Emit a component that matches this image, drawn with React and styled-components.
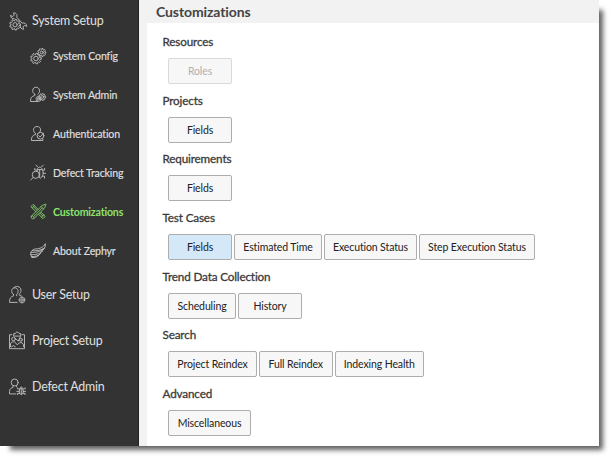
import React from 'react';
import styled, { createGlobalStyle } from 'styled-components';

const GlobalStyle = createGlobalStyle`
  * { box-sizing: border-box; }
  body { margin: 0; height: 461px; background: #fff; font-family: Lato, "Open Sans", sans-serif; }
`;

const Page = styled.div`
  width: 614px;
  height: 461px;
  overflow: hidden;
  background: #fff;
`;

const Window = styled.div`
  width: 599px;
  height: 446px;
  display: flex;
  background: #fff;
  box-shadow: 7px 7px 5px -3px rgba(0, 0, 0, 0.62);
`;

const Sidebar = styled.nav`
  width: 139px;
  flex: none;
  background: #333;
  border-right: 1px solid #222;
  display: flex;
  flex-direction: column;
`;

const MainItem = styled.a`
  height: ${(p) => (p.$first ? 37 : 46)}px;
  padding: ${(p) => (p.$first ? '4px 0 0 8px' : '1px 0 0 8px')};
  display: flex;
  align-items: center;
  gap: 4px;
  color: #e0e0e0;
  font-size: 12.4px;
  line-height: 16px;
  letter-spacing: -0.2px;
  white-space: nowrap;
`;

const SubItem = styled.a`
  height: 39px;
  padding: 0 0 1px 29px;
  display: flex;
  align-items: center;
  gap: 4px;
  color: ${(p) => (p.$active ? '#8be36b' : '#dedede')};
  font-size: 10.6px;
  font-weight: ${(p) => (p.$active ? 700 : 400)};
  line-height: 14px;
  -webkit-text-stroke: ${(p) => (p.$active ? 0 : 0.2)}px currentColor;
  letter-spacing: ${(p) => (p.$active ? -0.18 : -0.14)}px;
  white-space: nowrap;
`;

const Glyph = styled.svg`
  width: 20px;
  height: 20px;
  flex: none;
  overflow: visible;
  fill: none;
  stroke: ${(p) => p.$color || '#bababa'};
  stroke-width: 0.95;
  stroke-linecap: round;
  stroke-linejoin: round;
`;

const Content = styled.main`
  flex: 1;
  display: flex;
  flex-direction: column;
  background: #f2f2f2;
  padding-left: 8px;
`;

const Title = styled.h1`
  margin: 0;
  height: 23px;
  padding: 3px 0 0 9px;
  font-size: 14px;
  line-height: 18px;
  font-weight: 700;
  letter-spacing: -0.1px;
  color: #444;
`;

const Panel = styled.div`
  flex: 1;
  background: #fff;
  padding: 10px 0 0 15px;
`;

const Section = styled.section`
  height: 58.65px;
`;

const Heading = styled.h2`
  margin: 0;
  height: 25px;
  padding-left: 0.5px;
  font-size: 11.7px;
  line-height: 16px;
  font-weight: 400;
  -webkit-text-stroke: 0.3px currentColor;
  color: #3a3a3a;
  letter-spacing: -0.15px;
`;

const ButtonRow = styled.div`
  display: flex;
  gap: 2px;
  padding-left: 6px;
`;

const Button = styled.button`
  width: ${(p) => p.$width}px;
  height: 26px;
  flex: none;
  padding: 0;
  border: 1px solid ${(p) => (p.disabled ? '#dadada' : '#adadad')};
  border-radius: 2px;
  background: ${(p) => (p.$selected ? '#d5e8f8' : '#f7f7f7')};
  color: ${(p) => (p.disabled ? '#b0b0b0' : '#222')};
  font: 400 10.5px/14px Lato, sans-serif;
  letter-spacing: -0.11px;
  white-space: nowrap;
`;

function Gear({ cx, cy, r, teeth = 8, hole = 0.4 }) {
  const points = [];
  for (let i = 0; i < teeth; i += 1) {
    [[-0.32, 0.77], [-0.2, 1], [0.2, 1], [0.32, 0.77]].forEach(([o, k]) => {
      const a = ((i + o) / teeth) * Math.PI * 2;
      points.push(`${(cx + Math.cos(a) * r * k).toFixed(2)},${(cy + Math.sin(a) * r * k).toFixed(2)}`);
    });
  }
  return (
    <>
      <polygon points={points.join(' ')} />
      <circle cx={cx} cy={cy} r={r * hole} />
    </>
  );
}

const Bug = () => (
  <>
    <ellipse cx="13.3" cy="14.4" rx="2.1" ry="3.1" />
    <path d="M13.3 11.7v5.5M11.5 11.9H9.4v-1M11.2 14.4H8.8M11.6 16.4H9.5v1.2M15.1 11.9h2.1v-1M15.4 14.4h2.2M15 16.4h2.1v1.2M11.9 11c.3-1.4 2.5-1.4 2.8 0" />
  </>
);

const icons = {
  tools: (
    <>
      <Gear cx={7.1} cy={13.7} r={5.4} teeth={9} />
      <path d="M2.7 4.7l2.1.8 1.4-1.4-.7-2.2c2.6-.3 4.1 1.9 3.1 4.2l5.6 6.1c2.1-.8 4.7.6 4.5 3.2l-2.3-.9-1.5 1.5.8 2.2c-2.3.1-3.7-1.3-3.3-3.3M2.7 4.7c0 2.2 1.5 3.4 3.4 3" />
    </>
  ),
  gears: (
    <>
      <Gear cx={7} cy={12.5} r={5.4} teeth={9} hole={0.43} />
      <Gear cx={12.8} cy={6.5} r={4.1} teeth={9} hole={0.36} />
    </>
  ),
  admin: (
    <>
      <path d="M5.8 9.3C2.2 7.6 3.3 2.2 7 2.2s4.9 5 1.9 7.1M5.8 9.3v1.2c-3 .8-4.5 2.2-4.3 6h7" />
      <Gear cx={9.4} cy={14} r={2.6} teeth={7} />
      <Gear cx={13.2} cy={12} r={3.5} teeth={9} />
    </>
  ),
  auth: (
    <>
      <path d="M6.5 9.5C3 7.3 4.2 2.5 8 2.5s4.7 4 2.2 6.5M6.5 9.5v1C3.4 11.5 2.3 13 2.4 16.5h11.5v-1.2" />
      <circle cx="11.5" cy="11.7" r="3.4" />
      <path d="M9.7 11.6l1.4 1.4 3.5-3.7" />
    </>
  ),
  bugSearch: (
    <>
      <circle cx="6.8" cy="11.8" r="3.6" />
      <path d="M4.3 14.4l-2.6 2.6M8.2 8.3V6.6h5.1c1.4 3.3 1.4 6-1.7 8.7M10.7 6.8v8M8.4 6.3c0-3 4.6-3 4.6 0M8.5 3.8L7 2.1M12.7 3.8l1.5-1.7M13.6 7.1h2V5.3M14 10.3h2.6M13.2 13.2h2.3v2M7.8 7.1H5.8V5.4" />
    </>
  ),
  pencils: (
    <>
      <path d="M2.1 4.4l2-2 12.1 12-1.9 2zM3.5 5.7l2-2M12.7 15l2-2M4.6 4.9l9.4 9.3" />
      <path fill="#333" d="M2.4 14.2L13.1 3.5l3.8-1.4-1.3 3.8L4.9 16.7c-2.2.4-3.1-.6-2.5-2.5z" />
      <path d="M3.4 13.8l2 1.9M12.2 4.6l2.2 2.3M4.7 14.5l8.5-8.5" />
    </>
  ),
  wing: (
    <path d="M3.2 16.6C-.5 11.2 3.2 8.2 7 7.9c4-.3 7.2-1.4 9.4-5.2.3 4-2 6.8-4.7 8.1M2.2 11.4c4.9.2 9.1-.5 13.3-4.3M1.7 13.7c4.5.1 8.3-.4 12-3.6M3.2 16.6c3.2.2 5.4-.7 7.3-3.1M2.3 15.6c3.7.1 7.1-.5 9.3-3.1M3.4 9.7c3.5.5 8-.3 11-2.1" />
  ),
  users: (
    <>
      <path d="M5.6 9.6C2.4 7.6 3.2 3 6.7 2.8c3.7 0 4.5 4.6 1.8 6.8l.2 1.2M5.6 9.6v1.2c-3 1-4.2 2.5-4 6.6h7.6M5.4 3.2c1.9-3.2 7.5-2 7.6 2 0 2-.9 3.1-1.8 4l.3 1.2 2 .7" />
      <Gear cx={14} cy={15} r={3.1} teeth={8} hole={0.4} />
    </>
  ),
  board: (
    <>
      <path d="M3.8 3.7H1.5v14h15V3.7h-2.6M5.7 4.7V2.6h1.7c.1-2 3.5-2 3.6 0h1.7v2.1z" />
      <circle cx="5.5" cy="8" r="1.8" />
      <circle cx="12.9" cy="8.8" r="1.5" />
      <path d="M2.5 15.7v-3.2l2.1-1.7h2l2.7 3.1 2.1-2.2h2.5l1.7 2v2M7 7.1l3.2 3 2.2-4.4M3.5 15.8l2-1.2 1.8 1.2" />
    </>
  ),
  bugAdmin: (
    <>
      <circle cx="6.7" cy="5.5" r="3.5" />
      <path d="M5.1 8.8v1.5c-3.1.8-3.9 2.7-3.6 6.6h6.3M8.5 8.7v.9" />
      <Bug />
    </>
  ),
};

const Icon = ({ name, color }) => (
  <Glyph viewBox="0 0 20 20" $color={color} aria-hidden="true">{icons[name]}</Glyph>
);

const subItems = [
  { label: 'System Config', icon: 'gears' },
  { label: 'System Admin', icon: 'admin' },
  { label: 'Authentication', icon: 'auth' },
  { label: 'Defect Tracking', icon: 'bugSearch' },
  { label: 'Customizations', icon: 'pencils', active: true },
  { label: 'About Zephyr', icon: 'wing' },
];

const sections = [
  { title: 'Resources', buttons: [{ label: 'Roles', width: 64, disabled: true }] },
  { title: 'Projects', buttons: [{ label: 'Fields', width: 64 }] },
  { title: 'Requirements', buttons: [{ label: 'Fields', width: 64 }] },
  {
    title: 'Test Cases',
    buttons: [
      { label: 'Fields', width: 64, selected: true },
      { label: 'Estimated Time', width: 88 },
      { label: 'Execution Status', width: 93 },
      { label: 'Step Execution Status', width: 116 },
    ],
  },
  {
    title: 'Trend Data Collection',
    buttons: [{ label: 'Scheduling', width: 68 }, { label: 'History', width: 64 }],
  },
  {
    title: 'Search',
    buttons: [
      { label: 'Project Reindex', width: 89 },
      { label: 'Full Reindex', width: 73.5 },
      { label: 'Indexing Health', width: 89.5 },
    ],
  },
  { title: 'Advanced', buttons: [{ label: 'Miscellaneous', width: 83 }] },
];

export default function App() {
  return (
    <Page>
      <GlobalStyle />
      <Window>
        <Sidebar>
          <MainItem $first><Icon name="tools" />System Setup</MainItem>
          {subItems.map((item) => (
            <SubItem key={item.label} $active={item.active}>
              <Icon name={item.icon} color={item.active ? '#7fc96a' : undefined} />
              {item.label}
            </SubItem>
          ))}
          <MainItem><Icon name="users" />User Setup</MainItem>
          <MainItem><Icon name="board" />Project Setup</MainItem>
          <MainItem><Icon name="bugAdmin" />Defect Admin</MainItem>
        </Sidebar>
        <Content>
          <Title>Customizations</Title>
          <Panel>
            {sections.map((section) => (
              <Section key={section.title}>
                <Heading>{section.title}</Heading>
                <ButtonRow>
                  {section.buttons.map((b) => (
                    <Button key={b.label} $width={b.width} $selected={b.selected} disabled={b.disabled}>
                      {b.label}
                    </Button>
                  ))}
                </ButtonRow>
              </Section>
            ))}
          </Panel>
        </Content>
      </Window>
    </Page>
  );
}
